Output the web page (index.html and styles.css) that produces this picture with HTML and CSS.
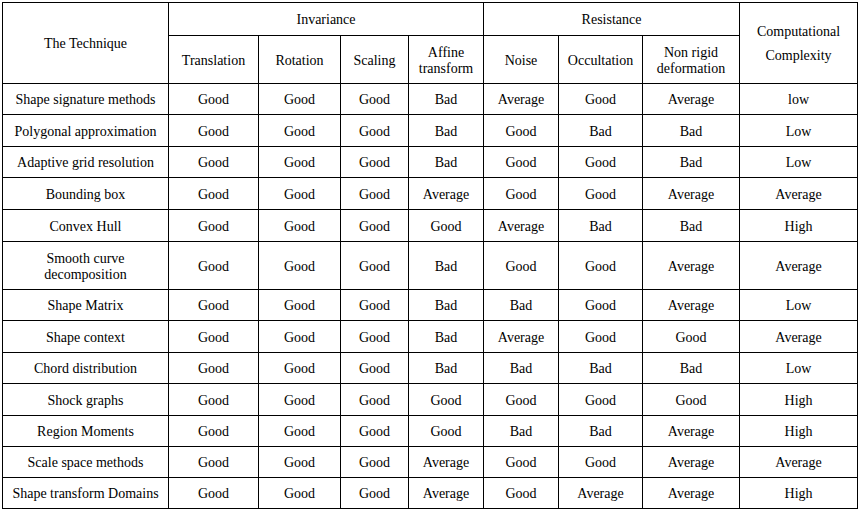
FILE: index.html
```html
<!DOCTYPE html>
<html>
<head>
<meta charset="utf-8">
<link rel="stylesheet" href="styles.css">
</head>
<body>
<table class="grid">
  <colgroup>
    <col class="c-tech">
    <col class="c-trans">
    <col class="c-rot">
    <col class="c-scal">
    <col class="c-aff">
    <col class="c-noise">
    <col class="c-occ">
    <col class="c-nonrigid">
    <col class="c-comp">
  </colgroup>
  <tr class="h1">
    <td rowspan="2">The Technique</td>
    <td colspan="4">Invariance</td>
    <td colspan="3">Resistance</td>
    <td rowspan="2" class="comp">Computational<br>Complexity</td>
  </tr>
  <tr class="h2">
    <td>Translation</td>
    <td>Rotation</td>
    <td>Scaling</td>
    <td>Affine<br>transform</td>
    <td>Noise</td>
    <td>Occultation</td>
    <td>Non rigid<br>deformation</td>
  </tr>
  <tr class="r31"><td>Shape signature methods</td><td>Good</td><td>Good</td><td>Good</td><td>Bad</td><td>Average</td><td>Good</td><td>Average</td><td>low</td></tr>
  <tr class="r32"><td>Polygonal approximation</td><td>Good</td><td>Good</td><td>Good</td><td>Bad</td><td>Good</td><td>Bad</td><td>Bad</td><td>Low</td></tr>
  <tr class="r31"><td>Adaptive grid resolution</td><td>Good</td><td>Good</td><td>Good</td><td>Bad</td><td>Good</td><td>Good</td><td>Bad</td><td>Low</td></tr>
  <tr class="r32"><td>Bounding box</td><td>Good</td><td>Good</td><td>Good</td><td>Average</td><td>Good</td><td>Good</td><td>Average</td><td>Average</td></tr>
  <tr class="r32"><td>Convex Hull</td><td>Good</td><td>Good</td><td>Good</td><td>Good</td><td>Average</td><td>Bad</td><td>Bad</td><td>High</td></tr>
  <tr class="r48"><td>Smooth curve<br>decomposition</td><td>Good</td><td>Good</td><td>Good</td><td>Bad</td><td>Good</td><td>Good</td><td>Average</td><td>Average</td></tr>
  <tr class="r31"><td>Shape Matrix</td><td>Good</td><td>Good</td><td>Good</td><td>Bad</td><td>Bad</td><td>Good</td><td>Average</td><td>Low</td></tr>
  <tr class="r32"><td>Shape context</td><td>Good</td><td>Good</td><td>Good</td><td>Bad</td><td>Average</td><td>Good</td><td>Good</td><td>Average</td></tr>
  <tr class="r31"><td>Chord distribution</td><td>Good</td><td>Good</td><td>Good</td><td>Bad</td><td>Bad</td><td>Bad</td><td>Bad</td><td>Low</td></tr>
  <tr class="r32"><td>Shock graphs</td><td>Good</td><td>Good</td><td>Good</td><td>Good</td><td>Good</td><td>Good</td><td>Good</td><td>High</td></tr>
  <tr class="r31"><td>Region Moments</td><td>Good</td><td>Good</td><td>Good</td><td>Good</td><td>Bad</td><td>Bad</td><td>Average</td><td>High</td></tr>
  <tr class="r31"><td>Scale space methods</td><td>Good</td><td>Good</td><td>Good</td><td>Average</td><td>Good</td><td>Good</td><td>Average</td><td>Average</td></tr>
  <tr class="r31"><td>Shape transform Domains</td><td>Good</td><td>Good</td><td>Good</td><td>Average</td><td>Good</td><td>Average</td><td>Average</td><td>High</td></tr>
</table>
</body>
</html>
```

FILE: styles.css
```css
html, body {
  margin: 0;
  padding: 0;
  background: #fff;
}
body {
  padding: 2px;
  font-family: "Liberation Serif", "Times New Roman", serif;
  font-size: 14px;
  color: #000;
}
.grid {
  border-collapse: collapse;
  table-layout: fixed;
  width: 856px;
}
.grid td {
  border: 1px solid #000;
  text-align: center;
  vertical-align: middle;
  padding: 2px 2px 0;
  line-height: 16px;
  overflow: hidden;
}
.c-tech { width: 166px; }
.c-trans { width: 90px; }
.c-rot { width: 82px; }
.c-scal { width: 68px; }
.c-aff { width: 75px; }
.c-noise { width: 75px; }
.c-occ { width: 84px; }
.c-nonrigid { width: 97px; }
.c-comp { width: 118px; }

.h1 td { height: 30px; }
.h2 td { height: 45px; }
.r31 td { height: 28px; }
.r32 td { height: 29px; }
.r48 td { height: 45px; }
.grid td.comp { line-height: 24px; }
```
